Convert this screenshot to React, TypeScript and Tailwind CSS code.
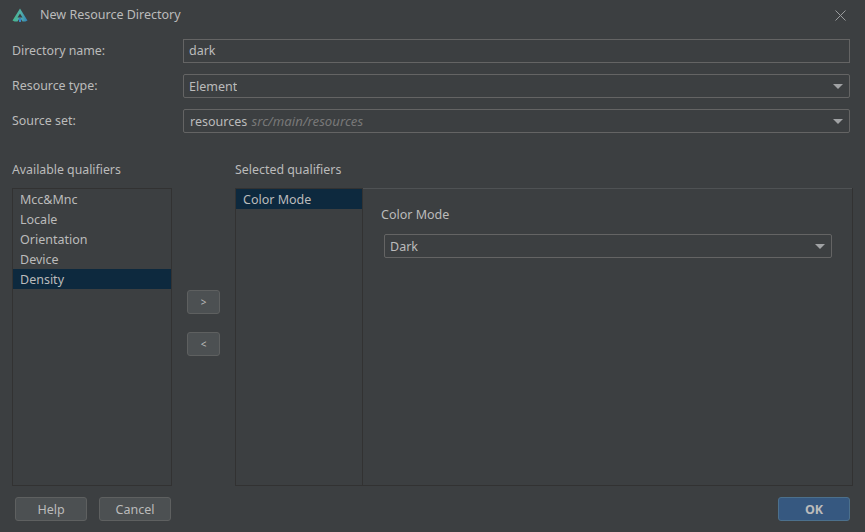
import React from 'react';

const font = { fontFamily: '"Noto Sans", "Open Sans", sans-serif' };

function Caret() {
  return (
    <svg width="10" height="5" viewBox="0 0 10 5" className="shrink-0">
      <path d="M0 0h10L5 5z" fill="#a0a2a4" />
    </svg>
  );
}

function FormRow({ label, children }: { label: string; children: React.ReactNode }) {
  return (
    <div className="flex items-center h-[24px]">
      <div className="w-[171px] shrink-0 text-[#bbbbbb] text-[12.4px]">{label}</div>
      {children}
    </div>
  );
}

function Select({ children }: { children: React.ReactNode }) {
  return (
    <div className="flex-1 h-[24px] flex items-center justify-between pl-[5px] pr-[6px] border border-[#646464] rounded-[2px] text-[#bbbbbb]">
      <div className="truncate pt-[2px]">{children}</div>
      <Caret />
    </div>
  );
}

function ListItem({ label, active }: { label: string; active?: boolean }) {
  return (
    <div className={`h-[20px] leading-[20px] pt-[1px] pl-[7px] text-[#bbbbbb] ${active ? 'bg-[#0d293e]' : ''}`}>{label}</div>
  );
}

function Btn({ label, primary, className }: { label: string; primary?: boolean; className?: string }) {
  return (
    <div
      className={`w-[72px] h-[24px] pt-[2px] flex items-center justify-center rounded-[3px] border ${
        primary
          ? 'bg-[#365880] border-[#4c708c] text-[#bbbbbb] font-bold'
          : 'bg-[#4c5052] border-[#5e6060] text-[#bbbbbb]'
      } ${className ?? ''}`}
    >
      {label}
    </div>
  );
}

function ArrowBtn({ label }: { label: string }) {
  return (
    <div className="w-[33px] h-[24px] flex items-center justify-center rounded-[3px] border border-[#5e6060] bg-[#4c5052] text-[#bbbbbb] text-[10px]">
      {label}
    </div>
  );
}

export default function App() {
  const available = ['Mcc&Mnc', 'Locale', 'Orientation', 'Device', 'Density'];

  return (
    <div className="w-[865px] h-[532px] bg-[#3c3f41] flex flex-col overflow-hidden text-[12.5px]" style={font}>
      {/* title bar */}
      <div className="h-[30px] flex items-center pl-[12px] pr-[19px] shrink-0">
        <svg width="16" height="14" viewBox="0 0 16 14" className="shrink-0">
          <defs>
            <linearGradient id="lg" x1="0" x2="1" y1="0" y2="0">
              <stop offset="0" stopColor="#45b58c" />
              <stop offset="0.55" stopColor="#52b0a8" />
              <stop offset="1" stopColor="#2f7fb8" />
            </linearGradient>
          </defs>
          <path d="M8 0.5L15.5 12.5 13.5 13.5H10.5L8 9.5 5.5 13.5H2.5L0.5 12.5z" fill="url(#lg)" />
          <path d="M8 5.5L10.5 9.5H5.5z" fill="#3c3f41" />
          <path d="M8 9.5L10 12H9v2H7v-2H6z" fill="#3a86c8" />
        </svg>
        <div className="ml-[12px] pt-[1px] text-[#bbbbbb]">New Resource Directory</div>
        <svg width="11" height="11" viewBox="0 0 11 11" className="ml-auto">
          <path d="M0.5 0.5l10 10M10.5 0.5l-10 10" stroke="#9a9c9e" strokeWidth="1" />
        </svg>
      </div>

      {/* form */}
      <div className="flex flex-col gap-[11px] mt-[9px] pl-[12px] pr-[15px] shrink-0">
        <FormRow label="Directory name:">
          <div className="flex-1 h-[24px] flex items-center pl-[5px] border border-[#646464] text-[#bbbbbb]">dark</div>
        </FormRow>
        <FormRow label="Resource type:">
          <Select>Element</Select>
        </FormRow>
        <FormRow label="Source set:">
          <Select>
            <span className="ml-[1px]">resources</span>{' '}
            <span className="italic text-[#787878] ml-[1px] text-[13.2px]">src/main/resources</span>
          </Select>
        </FormRow>
      </div>

      {/* qualifiers */}
      <div className="flex mt-[27px] pl-[12px] pr-[12px] h-[326px] shrink-0">
        <div className="w-[160px] shrink-0 flex flex-col">
          <div className="h-[18px] leading-[18px] pt-[1px] text-[#bbbbbb] text-[12.3px] mb-[10px]">Available qualifiers</div>
          <div className="flex-1 border border-[#323232] flex flex-col">
            {available.map((item) => (
              <ListItem key={item} label={item} active={item === 'Density'} />
            ))}
          </div>
        </div>

        <div className="w-[63px] shrink-0 flex flex-col items-center gap-[18px] pt-[130px]">
          <ArrowBtn label=">" />
          <ArrowBtn label="<" />
        </div>

        <div className="flex-1 flex flex-col min-w-0">
          <div className="h-[18px] leading-[18px] pt-[1px] text-[#bbbbbb] text-[12.4px] mb-[10px]">Selected qualifiers</div>
          <div className="flex-1 flex border border-[#323232] min-h-0">
            <div className="w-[127px] shrink-0 border-r border-[#323232]">
              <ListItem label="Color Mode" active />
            </div>
            <div className="flex-1 flex flex-col pl-[21px] pr-[20px] pt-[16px] border-t border-[#4f5254] -mt-px">
              <div className="h-[20px] leading-[20px] text-[#bbbbbb] mb-[9px] -ml-[3px]">Color Mode</div>
              <div className="h-[24px] flex">
                <Select>Dark</Select>
              </div>
            </div>
          </div>
        </div>
      </div>

      {/* footer */}
      <div className="flex items-center mt-[11px] pl-[15px] pr-[15px] shrink-0">
        <Btn label="Help" />
        <Btn label="Cancel" className="ml-[12px]" />
        <Btn label="OK" primary className="ml-auto" />
      </div>
    </div>
  );
}
